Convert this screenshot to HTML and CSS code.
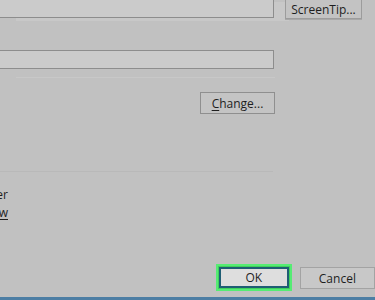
FILE: index.html
```html
<!DOCTYPE html>
<html>
<head>
  <meta charset="utf-8">
  <title>Insert Hyperlink</title>
  <link rel="stylesheet" href="styles.css">
</head>
<body>
<div class="dialog">
  <div class="row top">
    <div class="field"></div>
    <button class="btn tip">ScreenTip...</button>
  </div>
  <div class="row second">
    <div class="field"></div>
  </div>
  <div class="hl"></div>
  <div class="row change-row">
    <button class="btn change"><u>C</u>hange...</button>
  </div>
  <div class="rule"></div>
  <div class="when">
    <div class="opt">Edit the new document later</div>
    <div class="opt">Edit the new document no<u>w</u></div>
  </div>
  <div class="footer">
    <button class="btn ok">OK</button>
    <button class="btn cancel">Cancel</button>
  </div>
</div>
<div class="taskbar"></div>
</body>
</html>
```

FILE: styles.css
```css
html, body { margin: 0; padding: 0; }
body { width: 375px; height: 300px; overflow: hidden; background: #c1c1c1; font-family: "Open Sans", "Noto Sans", sans-serif; font-size: 12px; color: #1e1e1e; }
.dialog { width: 375px; height: 297px; display: flex; flex-direction: column; }
.row { display: flex; align-items: flex-start; }
.field { width: 275px; height: 19px; margin-left: -1px; background: #cbcbcb; border: 1px solid #8d8d8d; border-left: none; box-sizing: border-box; }
.top { margin-top: -3px; }
.top .field { height: 21px; box-shadow: 16px 4px 0 -1px #c8c8c8; }
.second { margin-top: 31px; }
.hl { width: 259px; height: 1px; margin-left: 16px; margin-top: 8px; background: #c8c8c8; }
.btn { font-family: inherit; font-size: 12px; color: #1e1e1e; padding: 0; box-sizing: border-box; cursor: pointer; }
.btn u { text-decoration-thickness: 1px; text-underline-offset: 2px; }
.tip { width: 77px; height: 22px; margin-left: 11px; background: #c3c3c3; border: 1px solid #9c9c9c; line-height: 24px; box-shadow: 0 1px 0 #a8a8a8; }
.change-row { margin-top: 14px; padding-left: 200px; }
.change { width: 75px; height: 22px; background: #c4c4c4; border: 1px solid #8f8f8f; }
.rule { width: 273px; height: 1px; background: #b9b9b9; margin-top: 57px; }
.when { width: 208px; margin-left: -200px; margin-top: 15px; text-align: right; display: flex; flex-direction: column; gap: 3px; }
.opt { line-height: 15px; white-space: nowrap; }
.opt u { text-underline-offset: 2px; }
.footer { margin-top: auto; margin-bottom: 8px; display: flex; padding-left: 219px; gap: 11px; }
.ok { width: 74px; height: 21px; background: #dedede; border: 2px solid #1f5d74; box-shadow: 0 0 0 1px #3fcf5c, 0 0 0 3px #56ec74; }
.cancel { width: 80px; height: 22px; background: #c8c8c8; border: 1px solid #a3a3a3; }
.taskbar { height: 3px; background: #4d7ea4; }
```
